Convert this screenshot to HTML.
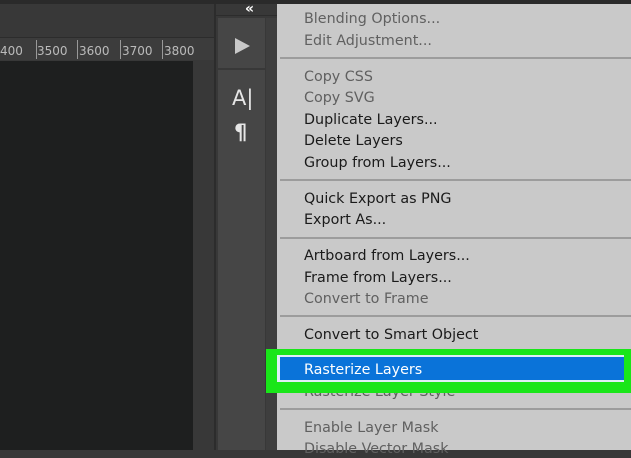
<!DOCTYPE html>
<html><head><meta charset="utf-8"><style>
*{margin:0;padding:0;box-sizing:border-box}
body{width:631px;height:450px;overflow:hidden;background:#383838;position:relative;font-family:"DejaVu Sans","Liberation Sans",sans-serif}
.a{position:absolute}
.menu{left:277px;top:4px;width:354px;height:446px;background:#c9c9c9}
.it{position:absolute;left:304px;font-size:14.3px;color:#1a1a1a;white-space:nowrap;line-height:18px;margin-top:1px}
.g{color:#606060}
.d{position:absolute;left:280px;right:0;height:2px;background:#9c9c9c}
.r{position:absolute;top:44px;font-size:12px;color:#bbb}
</style></head><body>
<div class="a" style="left:0;top:0;width:631px;height:4px;background:#2a2a2a"></div>
<div class="a" style="left:0;top:4px;width:214px;height:34px;background:#383838"></div>
<div class="a" style="left:0;top:37px;width:214px;height:1px;background:#2c2c2c"></div>
<div class="a" style="left:0;top:38px;width:214px;height:22px;background:#3c3c3c"></div>
<span class="r" style="left:0">400</span>
<span class="r" style="left:37px">3500</span>
<span class="r" style="left:79px">3600</span>
<span class="r" style="left:122px">3700</span>
<span class="r" style="left:164px">3800</span>
<div class="a" style="left:36px;top:40px;width:1px;height:19px;background:#999"></div>
<div class="a" style="left:77px;top:40px;width:1px;height:19px;background:#999"></div>
<div class="a" style="left:120px;top:40px;width:1px;height:19px;background:#999"></div>
<div class="a" style="left:162px;top:40px;width:1px;height:19px;background:#999"></div>
<div class="a" style="left:0;top:61px;width:193px;height:389px;background:#1e1f1f"></div>
<div class="a" style="left:214px;top:4px;width:2px;height:446px;background:#2c2c2c"></div>
<div class="a" style="left:216px;top:4px;width:61px;height:446px;background:#383838"></div>
<div class="a" style="left:216px;top:15px;width:61px;height:1px;background:#2c2c2c"></div>
<div class="a" style="left:245px;top:1px;font-size:14px;color:#fff;font-weight:bold">«</div>
<div class="a" style="left:218px;top:18px;width:47px;height:50px;background:#464646"></div>
<div class="a" style="left:218px;top:70px;width:47px;height:380px;background:#464646"></div>
<div class="a" style="left:235px;top:38px;width:0;height:0;border-top:8px solid transparent;border-bottom:8px solid transparent;border-left:15px solid #c8c8c8"></div>
<div class="a" style="left:232px;top:86px;font-size:21px;color:#e6e6e6">A|</div>
<div class="a" style="left:234px;top:120px;font-size:21px;color:#e6e6e6;font-weight:bold">¶</div>
<div class="a" style="left:266px;top:18px;width:11px;height:432px;background:#3e3e3e"></div>
<div class="a menu"></div>
<div class="it g" style="top:9px">Blending Options...</div>
<div class="it g" style="top:31px">Edit Adjustment...</div>
<div class="d" style="top:57px"></div>
<div class="it g" style="top:67px">Copy CSS</div>
<div class="it g" style="top:88px">Copy SVG</div>
<div class="it" style="top:110px">Duplicate Layers...</div>
<div class="it" style="top:131px">Delete Layers</div>
<div class="it" style="top:153px">Group from Layers...</div>
<div class="d" style="top:179px"></div>
<div class="it" style="top:189px">Quick Export as PNG</div>
<div class="it" style="top:210px">Export As...</div>
<div class="d" style="top:237px"></div>
<div class="it" style="top:246px">Artboard from Layers...</div>
<div class="it" style="top:268px">Frame from Layers...</div>
<div class="it g" style="top:289px">Convert to Frame</div>
<div class="d" style="top:315px"></div>
<div class="it" style="top:325px">Convert to Smart Object</div>
<div class="it g" style="top:382px">Rasterize Layer Style</div>
<div class="a" style="left:266px;top:349px;width:365px;height:44px;background:#19e619"></div>
<div class="a" style="left:277px;top:355px;width:347px;height:27px;background:#dfeef6"></div>
<div class="a" style="left:280px;top:357px;width:344px;height:23px;background:#0a73d9"></div>
<div class="it" style="top:360px;color:#fff">Rasterize Layers</div>
<div class="d" style="top:408px"></div>
<div class="it g" style="top:418px">Enable Layer Mask</div>
<div class="it g" style="top:439px">Disable Vector Mask</div>
</body></html>
